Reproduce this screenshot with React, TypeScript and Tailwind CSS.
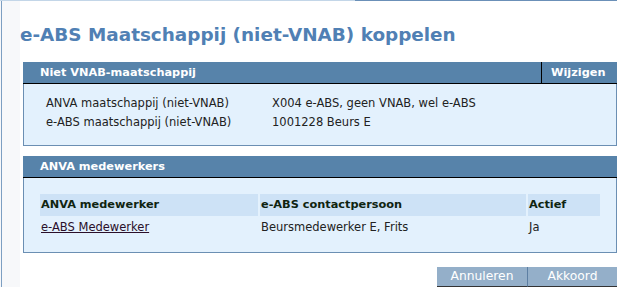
import React from "react";

const rows = [
  { label: "ANVA maatschappij (niet-VNAB)", value: "X004 e-ABS, geen VNAB, wel e-ABS" },
  { label: "e-ABS maatschappij (niet-VNAB)", value: "1001228 Beurs E" },
];

function PanelHeader({ title, action }: { title: string; action?: string }) {
  return (
    <div className="flex h-[22px] bg-[#5783aa] border-b border-black text-white font-bold text-[11.3px] leading-[21px]">
      <div className="flex-1 pl-[17px]">{title}</div>
      {action && (
        <div className="w-[76px] border-l border-black pl-[9px]">{action}</div>
      )}
    </div>
  );
}

export default function App() {
  return (
    <div className="w-[617px] h-[287px] overflow-hidden bg-[#f7f8fa] font-['DejaVu_Sans',Verdana,sans-serif]">
      {/* top frame line */}
      <div className="flex h-px">
        <div className="w-[355px] bg-[#c3d6e8]" />
        <div className="flex-1 bg-[#6b90b8]" />
      </div>
      <div className="ml-px h-[286px] border-l border-[#7d9fc2] pl-[18px]">
        <div className="h-full bg-white pl-[3px]">
          <h1 className="pt-[22px] h-[61px] -ml-[3px] text-[18.4px] leading-[24px] font-bold text-[#5080b4]">
            e-ABS Maatschappij (niet-VNAB) koppelen
          </h1>

          {/* Niet VNAB-maatschappij */}
          <div className="w-[594px]">
            <PanelHeader title="Niet VNAB-maatschappij" action="Wijzigen" />
            <div className="h-[62px] bg-[#e3f1fd] border-x border-b border-[#6b8fb3] pt-[10px] pl-[22px] text-[11.5px] leading-[19px] text-[#222]">
              {rows.map((r) => (
                <div key={r.label} className="flex">
                  <div className="w-[226px]">{r.label}</div>
                  <div>{r.value}</div>
                </div>
              ))}
            </div>
          </div>

          {/* ANVA medewerkers */}
          <div className="w-[594px] mt-[10px]">
            <PanelHeader title="ANVA medewerkers" />
            <div className="h-[75px] bg-[#e3f1fd] border-x border-b border-[#6b8fb3] pt-[16px] pl-[16px] text-[11.5px]">
              <div className="grid grid-cols-[218px_266px_72px] gap-x-[2px]">
                <div className="h-[22px] leading-[22px] bg-[#cde2f6] font-bold text-[11.3px] text-[#0f2410] pl-px">ANVA medewerker</div>
                <div className="h-[22px] leading-[22px] bg-[#cde2f6] font-bold text-[11.3px] text-[#0f2410] pl-px">e-ABS contactpersoon</div>
                <div className="h-[22px] leading-[22px] bg-[#cde2f6] font-bold text-[11.3px] text-[#0f2410] pl-px">Actief</div>
                <div className="h-[22px] leading-[22px] pl-px">
                  <a href="#" className="underline text-[#2a0f2a]">e-ABS Medewerker</a>
                </div>
                <div className="h-[22px] leading-[22px] text-[#222] pl-px">Beursmedewerker E, Frits</div>
                <div className="h-[22px] leading-[22px] text-[#222] pl-px">Ja</div>
              </div>
            </div>
          </div>

          {/* buttons */}
          <div className="flex justify-end w-[594px] mt-[14px]">
            <button className="w-[91px] h-[20px] bg-[#94afc9] border-b border-[#333] border-r border-r-[#5d7fa3] text-white text-[12.3px] leading-[19px]">
              Annuleren
            </button>
            <button className="w-[89px] h-[20px] bg-[#94afc9] border-b border-[#333] text-white text-[12.3px] leading-[19px]">
              Akkoord
            </button>
          </div>
        </div>
      </div>
    </div>
  );
}
